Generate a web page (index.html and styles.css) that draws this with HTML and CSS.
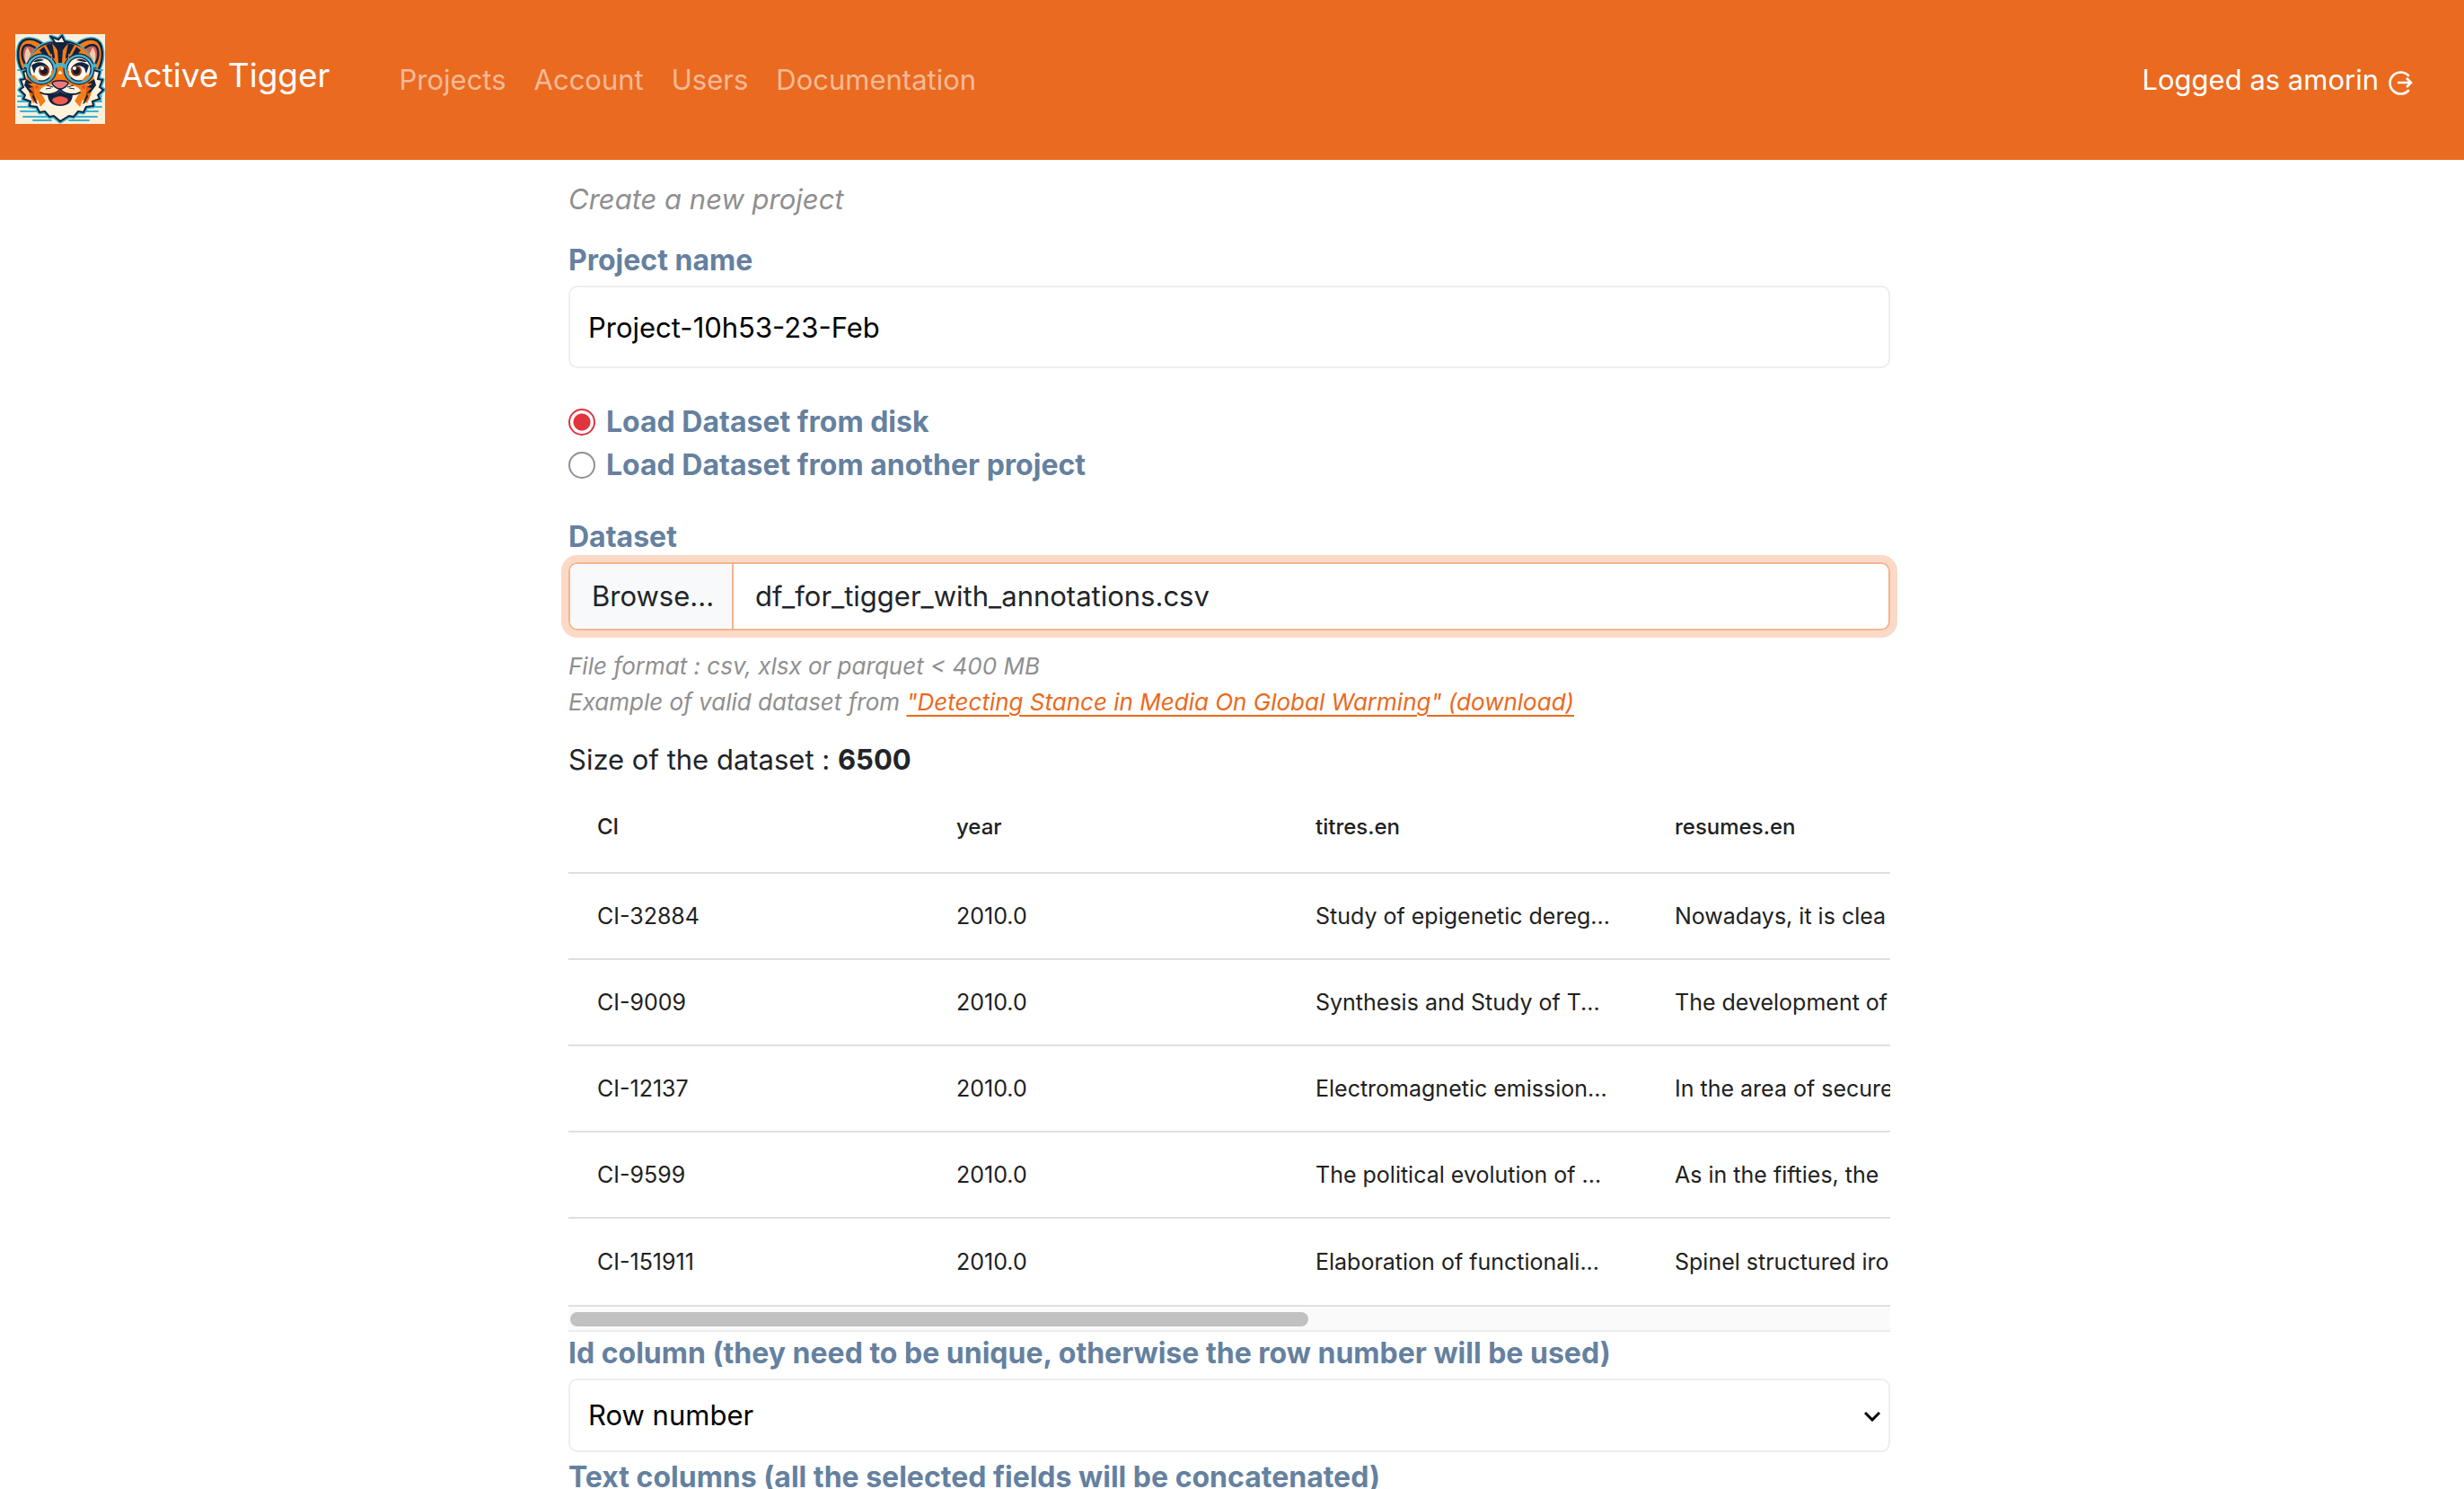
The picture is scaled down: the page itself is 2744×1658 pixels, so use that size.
FILE: index.html
```html
<!DOCTYPE html>
<html lang="en">
<head>
  <meta charset="UTF-8" />
  <meta name="viewport" content="width=device-width, initial-scale=1.0"/>
  <title>Active Tigger</title>
  <link rel="stylesheet" href="styles.css">
</head>
<body>
  <header class="navbar">
    <a class="brand" href="#">
      <svg class="logo" viewBox="0 0 100 100" role="img" aria-label="Tiger">
        <rect width="100" height="100" fill="#faf0dc"/>
        <!-- water lines -->
        <path d="M3 40h10M88 40h9M3 69h20M78 69h18M3 75h26M72 75h24M3 81h30M68 81h28M6 86h32M64 86h28M9 92h30M61 92h30M20 96h20M60 96h22" stroke="#37b4d3" stroke-width="2" stroke-linecap="round"/>
        <!-- ears -->
        <g stroke="#3cb5d0" stroke-width="5">
          <path d="M8 41C1 28 1 9 12 6c9-2 18 4 22 9z"/>
          <path d="M92 41c7-13 7-32-4-35-9-2-18 4-22 9z"/>
        </g>
        <g stroke="#12223f" stroke-width="2.4">
          <path d="M8 41C1 28 1 9 12 6c9-2 18 4 22 9z" fill="#f47b16"/>
          <path d="M92 41c7-13 7-32-4-35-9-2-18 4-22 9z" fill="#f47b16"/>
          <path d="M12 35C5 25 7 13 13 12c6 0 11 4 14 9z" fill="#c9605a"/>
          <path d="M88 35c7-10 5-22-1-23-6 0-11 4-14 9z" fill="#c9605a"/>
        </g>
        <path d="M12 33c-3-8-1-16 2-18l5 11zM88 33c3-8 1-16-2-18l-5 11z" fill="#f7c9a7"/>
        <!-- head with its fur outline -->
        <path d="M50 97l-7-6-5 1-5-6-6 1-3-6-8-1 1-5-8-3 2-4-6-6 4-3-3-8 5-1-2-8 7-2C14 24 27 10 44 9l-4-6 8 3 4-4 3 6c17 2 30 16 32 32l7 2-2 8 5 1-3 8 4 3-6 6 2 4-8 3 1 5-8 1-3 6-6-1-5 6-5-1z" fill="#fff3dc" stroke="#3cb5d0" stroke-width="5" stroke-linejoin="round"/>
        <path d="M50 97l-7-6-5 1-5-6-6 1-3-6-8-1 1-5-8-3 2-4-6-6 4-3-3-8 5-1-2-8 7-2C14 24 27 10 44 9l-4-6 8 3 4-4 3 6c17 2 30 16 32 32l7 2-2 8 5 1-3 8 4 3-6 6 2 4-8 3 1 5-8 1-3 6-6-1-5 6-5-1z" fill="#fff3dc" stroke="#12223f" stroke-width="2"/>
        <path d="M13 54c-2-17 1-32 16-40 10-6 32-6 43 0 14 8 17 23 15 40l-3 14-4 9-5-4-3 8-7-8-15 9-15-9-7 8-3-8-5 4-4-9z" fill="#f57c14"/>
        <path d="M15 58l3 14 5 5c-2-7-2-13-2-19zM85 58l-3 14-5 5c2-7 2-13 2-19z" fill="#e35c10"/>
        <path d="M21 30c4-8 14-9 22 0l3 7-8-2zM79 30c-4-8-14-9-22 0l-3 7 8-2z" fill="#fff3dc"/>
        <!-- stripes -->
        <g fill="#12223f">
          <path d="M40 9h20l-5 6-2 3-1 13c0 3-4 3-4 0l-1-13-2-3z"/>
          <path d="M34 12l7-2 3 15c0 3-2 3-3 0zM66 12l-7-2-3 15c0 3 2 3 3 0z"/>
          <path d="M27 18l5-4 8 15-3 1zM73 18l-5-4-8 15 3 1z"/>
          <path d="M22 26c4-6 12-5 15 0-5-2-10-2-15 0zM78 26c-4-6-12-5-15 0 5-2 10-2 15 0z"/>
          <path d="M12 50l8 5-6 0 6 4-5 1 6 6-5-1-6-8zM88 50l-8 5 6 0-6 4 5 1-6 6 5-1 6-8z"/>
          <path d="M20 66l5 12-2-1-4-7zM80 66l-5 12 2-1 4-7z"/>
        </g>
        <!-- glasses and eyes -->
        <g fill="#fff3dc" stroke="#12223f" stroke-width="5">
          <circle cx="29" cy="39" r="15"/>
          <circle cx="71" cy="39" r="15"/>
        </g>
        <path d="M38 49c3-2 5-6 5-10l-5 4zM62 49c-3-2-5-6-5-10l5 4zM17 45c1 4 5 8 10 8l-6-7zM83 45c-1 4-5 8-10 8l6-7z" fill="#f57c14"/>
        <g fill="none" stroke="#45b5cf" stroke-width="2.6">
          <circle cx="29" cy="39" r="15"/>
          <circle cx="71" cy="39" r="15"/>
          <path d="M44 37c2-4 10-4 12 0M14 36l-4-2M86 36l4-2" stroke-width="4"/>
        </g>
        <path d="M21 44c0-9 5-12 11-11 6 0 8 5 8 12-5 4-13 5-19-1zM79 44c0-9-5-12-11-11-6 0-8 5-8 12 5 4 13 5 19-1z" fill="#fff"/>
        <path d="M18 35c7-6 16-5 21 5-6-6-12-6-16-2l-2 6zM82 35c-7-6-16-5-21 5 6-6 12-6 16-2l2 6z" fill="#12223f"/>
        <path d="M20 31c4-4 9-4 12-2l-9 2zM80 31c-4-4-9-4-12-2l9 2z" fill="#12223f"/>
        <circle cx="32" cy="41" r="6" fill="#87401e"/>
        <circle cx="68" cy="41" r="6" fill="#87401e"/>
        <circle cx="32" cy="41" r="4" fill="#1c1722"/>
        <circle cx="68" cy="41" r="4" fill="#1c1722"/>
        <circle cx="30" cy="38" r="2" fill="#fff"/>
        <circle cx="66" cy="38" r="2" fill="#fff"/>
        <path d="M48 44l2-3 2 3zM40 27h1M59 27h1M40 23h1M59 23h1" fill="#fff3dc" stroke="#fff3dc"/>
        <!-- muzzle -->
        <path d="M42 56c-7 1-14 3-15 8 4 4 6 11 12 17l11 13 11-13c6-6 8-13 12-17-1-5-8-7-15-8z" fill="#fff3dc"/>
        <path d="M36 66c7 2 11 0 14-3 3 3 7 5 14 3 0 9-5 14-14 14s-14-5-14-14z" fill="#12223f"/>
        <path d="M41 73c5-5 13-5 18 0-2 7-16 7-18 0z" fill="#f25a4f"/>
        <path d="M28 65c7 4 18 2 22-4 4 6 15 8 22 4M50 58v4" fill="none" stroke="#12223f" stroke-width="2" stroke-linecap="round"/>
        <path d="M41 54c3-3 15-3 18 0 0 3-5 7-9 7s-9-4-9-7z" fill="#f2777b" stroke="#12223f" stroke-width="1.4"/>
        <path d="M35 57l7 2M34 61l6-1M65 57l-7 2M66 61l-6-1" stroke="#12223f"/>
        <circle cx="24" cy="59" r="2" fill="#ef4a3f"/>
        <circle cx="76" cy="59" r="2" fill="#ef4a3f"/>
      </svg>
      <span>Active Tigger</span>
    </a>
    <nav>
      <a href="#">Projects</a>
      <a href="#">Account</a>
      <a href="#">Users</a>
      <a href="#">Documentation</a>
    </nav>
    <div class="user">
      Logged as amorin
      <button type="button" class="logout" aria-label="Log out">
        <svg viewBox="0 0 28 28" fill="none" stroke="currentColor" stroke-width="2.6">
          <path d="M22 6a12 12 0 1 0 0 17" stroke-linecap="round"/>
          <path d="M10 14h15M20 9l5 5-5 5"/>
        </svg>
      </button>
    </div>
  </header>

  <main>
    <form>
      <p class="explanation">Create a new project</p>

      <label class="title" for="project_name">Project name</label>
      <input class="text-input" type="text" id="project_name" value="Project-10h53-23-Feb" />

      <div class="sources">
        <label><input type="radio" name="source" checked /> Load Dataset from disk</label>
        <label><input type="radio" name="source" /> Load Dataset from another project</label>
      </div>

      <label class="title" for="dataset">Dataset</label>
      <div class="file-control">
        <input type="file" id="dataset" />
        <label for="dataset">
          <span class="browse">Browse...</span>
          <span class="file-name">df_for_tigger_with_annotations.csv</span>
        </label>
      </div>
      <p class="hint">
        File format : csv, xlsx or parquet &lt; 400 MB<br>
        Example of valid dataset from <a href="#">"Detecting Stance in Media On Global Warming" (download)</a>
      </p>

      <p class="size">Size of the dataset : <b>6500</b></p>

      <div class="table-scroll">
        <table>
          <thead>
            <tr><th>CI</th><th>year</th><th>titres.en</th><th>resumes.en</th></tr>
          </thead>
          <tbody>
            <tr><td>CI-32884</td><td>2010.0</td><td>Study of epigenetic dereg...</td><td>Nowadays, it is clea</td></tr>
            <tr><td>CI-9009</td><td>2010.0</td><td>Synthesis and Study of T...</td><td>The development of</td></tr>
            <tr><td>CI-12137</td><td>2010.0</td><td>Electromagnetic emission...</td><td>In the area of secure</td></tr>
            <tr><td>CI-9599</td><td>2010.0</td><td>The political evolution of ...</td><td>As in the fifties, the</td></tr>
            <tr><td>CI-151911</td><td>2010.0</td><td>Elaboration of functionali...</td><td>Spinel structured iro</td></tr>
          </tbody>
        </table>
      </div>
      <div class="scroll-track"><div class="scroll-thumb"></div></div>

      <label class="title" for="col_id">Id column (they need to be unique, otherwise the row number will be used)</label>
      <div class="select-wrap">
        <select id="col_id">
          <option>Row number</option>
        </select>
        <svg class="chevron" viewBox="0 0 18 12" fill="none" stroke="#000" stroke-width="3"><path d="M1 2l8 8 8-8"/></svg>
      </div>

      <span class="title">Text columns (all the selected fields will be concatenated)</span>
    </form>
  </main>
</body>
</html>
```
FILE: styles.css
```css
* {
  box-sizing: border-box;
}

html {
  overflow: hidden;
}

body {
  margin: 0;
  font-family: Inter, "Liberation Sans", sans-serif;
  font-size: 31px;
  line-height: 48px;
  color: #212529;
  background: #fff;
}

p {
  margin: 0;
}

/* navbar */
.navbar {
  display: flex;
  align-items: center;
  height: 178px;
  padding: 0 56px 0 17px;
  background: #ea6a20;
  color: #fff;
}

.brand {
  display: flex;
  align-items: center;
  gap: 17px;
  padding-bottom: 2px;
  font-size: 37px;
  color: #fff;
  text-decoration: none;
}

.brand span {
  padding-bottom: 8px;
}

.logo {
  width: 100px;
  height: 100px;
}

.navbar nav {
  display: flex;
  gap: 31px;
  margin-left: 77px;
}

.navbar nav a {
  color: rgba(255, 255, 255, 0.55);
  text-decoration: none;
}

.user {
  display: flex;
  align-items: center;
  gap: 11px;
  margin-left: auto;
}

.logout {
  display: flex;
  padding: 5px 0 0;
  border: none;
  background: none;
  color: inherit;
}

.logout svg {
  width: 28px;
  height: 28px;
}

/* form */
main {
  max-width: 1478px;
  margin: 0 auto;
  padding: 20px 6px 0 0;
}

.explanation {
  margin-bottom: 20px;
  font-style: italic;
  color: #8f8f8f;
}

.title {
  display: block;
  font-size: 32px;
  font-weight: 700;
  color: #65819f;
}

.text-input,
select {
  display: block;
  width: 100%;
  padding: 0 20px;
  border: 2px solid #eee;
  border-radius: 10px;
  background: #fff;
  font: inherit;
  color: #000;
}

.text-input {
  height: 92px;
  margin-top: 4px;
}

.sources {
  margin: 36px 0 32px;
}

.sources label {
  display: flex;
  align-items: center;
  gap: 12px;
  font-size: 32px;
  font-weight: 700;
  color: #65819f;
}

.sources input {
  appearance: none;
  width: 30px;
  height: 30px;
  margin: 0;
  border: 2px solid #8f8f9d;
  border-radius: 50%;
}

.sources input:checked {
  border-color: #e0353c;
  background: radial-gradient(#e0353c 9px, #fff 10px);
}

.file-control {
  position: relative;
  margin-top: 4px;
}

.file-control input {
  position: absolute;
  opacity: 0;
}

.file-control label {
  display: flex;
  height: 76px;
  border: 2px solid #f5b48f;
  border-radius: 10px;
  box-shadow: 0 0 0 8px #fbd9c7;
  line-height: 72px;
  overflow: hidden;
}

.browse {
  padding: 0 20px 0 24px;
  border-right: 2px solid #f5b48f;
  background: #f8f9fa;
}

.file-name {
  padding-left: 24px;
}

.hint {
  margin-top: 20px;
  font-size: 26px;
  font-style: italic;
  line-height: 40px;
  color: #8f8f8f;
}

.hint a {
  color: #ea6a20;
  text-decoration-thickness: 2px;
  text-underline-offset: 5px;
}

.size {
  margin-top: 20px;
}

/* dataset preview */
.table-scroll {
  overflow: hidden;
}

table {
  width: 1600px;
  table-layout: fixed;
  border-collapse: collapse;
  font-size: 25px;
  color: #212121;
}

th,
td {
  height: 96px;
  padding: 0 32px;
  border-bottom: 2px solid #e0e0e0;
  text-align: left;
  white-space: nowrap;
}

th {
  height: 102px;
  font-size: 24px;
  font-weight: 500;
}

tbody tr:last-child td {
  height: 98px;
}

.scroll-track {
  height: 28px;
  padding: 6px 2px 0;
  border-bottom: 2px solid #ececec;
  background: #fafafa;
}

.scroll-thumb {
  width: 56%;
  height: 16px;
  border-radius: 8px;
  background: #c1c1c1;
}

.select-wrap {
  position: relative;
  margin: 4px 0;
}

select {
  appearance: none;
  height: 82px;
}

.chevron {
  position: absolute;
  top: 36px;
  right: 11px;
  width: 18px;
  height: 12px;
}
```
